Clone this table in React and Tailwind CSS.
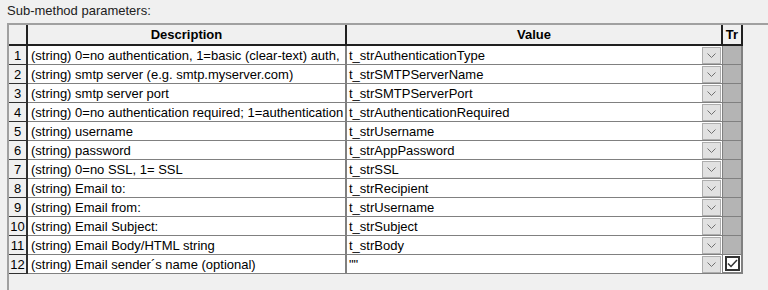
import React from "react";

const rows = [
  ["(string) 0=no authentication, 1=basic (clear-text) auth,", "t_strAuthenticationType"],
  ["(string) smtp server (e.g. smtp.myserver.com)", "t_strSMTPServerName"],
  ["(string) smtp server port", "t_strSMTPServerPort"],
  ["(string) 0=no authentication required; 1=authentication", "t_strAuthenticationRequired"],
  ["(string) username", "t_strUsername"],
  ["(string) password", "t_strAppPassword"],
  ["(string) 0=no SSL, 1= SSL", "t_strSSL"],
  ["(string) Email to:", "t_strRecipient"],
  ["(string) Email from:", "t_strUsername"],
  ["(string) Email Subject:", "t_strSubject"],
  ["(string) Email Body/HTML string", "t_strBody"],
  ["(string) Email sender´s name (optional)", "\"\""],
];

function Chevron() {
  return (
    <svg width="9" height="5" viewBox="0 0 9 5" className="block">
      <path d="M0.5 0.5 L4.5 4.5 L8.5 0.5" fill="none" stroke="#707070" strokeWidth="1" />
    </svg>
  );
}

export default function App() {
  return (
    <div
      className="w-[768px] h-[290px] overflow-hidden bg-[#f0f0f0] text-black text-[13px] leading-none"
      style={{ fontFamily: '"Liberation Sans", Arial, sans-serif' }}
    >
      <div className="h-[23px] pl-[7px] pt-[4px] text-[#202020]">Sub-method parameters:</div>
      <div className="ml-[7px] h-[267px] border-l-2 border-t-2 border-[#a0a0a0]">
        {/* header */}
        <div className="flex h-[21px]">
          <div className="w-[19px] shrink-0 border-r-2 border-b-2 border-[#202020] bg-[#f0f0f0]" />
          <div className="w-[319px] shrink-0 border-r-2 border-b-2 border-[#202020] bg-[#f0f0f0] flex items-center justify-center font-bold">
            Description
          </div>
          <div className="w-[376px] shrink-0 border-r-2 border-b-2 border-[#202020] bg-[#f0f0f0] flex items-center justify-center font-bold">
            Value
          </div>
          <div className="w-[20px] shrink-0 border-r-2 border-b-2 border-[#202020] bg-[#f0f0f0] flex items-center justify-center font-bold">
            Tr
          </div>
        </div>
        {rows.map(([d, v], i) => (
          <div key={i} className="flex h-[19px]">
            <div className="w-[19px] shrink-0 border-r-2 border-b border-[#303030] bg-[#f0f0f0] flex items-center justify-center">
              {i + 1}
            </div>
            <div className="w-[319px] shrink-0 border-r-2 border-b border-[#808080] bg-white flex items-center pl-[3px] whitespace-nowrap overflow-hidden">
              {d}
            </div>
            <div className="w-[376px] shrink-0 border-r border-b border-[#808080] bg-white flex items-center justify-between pl-[2px] pr-[1px]">
              <span className="whitespace-nowrap">{v}</span>
              <div className="w-[19px] h-[17px] bg-[#e1e1e1] border border-[#adadad] flex items-center justify-center">
                <Chevron />
              </div>
            </div>
            {i === 11 ? (
              <div className="w-[20px] shrink-0 border-r-2 border-b-2 border-[#808080] bg-white flex items-center justify-center">
                <div className="w-[15px] h-[15px] border-2 border-[#333333] bg-white flex items-center justify-center">
                  <svg width="11" height="9" viewBox="0 0 11 9">
                    <path d="M1 4.5 L4 7.5 L10 1" fill="none" stroke="#333333" strokeWidth="1.5" />
                  </svg>
                </div>
              </div>
            ) : (
              <div className="w-[20px] shrink-0 border-r-2 border-b border-[#808080] bg-[#b4b4b4]" />
            )}
          </div>
        ))}
      </div>
    </div>
  );
}
